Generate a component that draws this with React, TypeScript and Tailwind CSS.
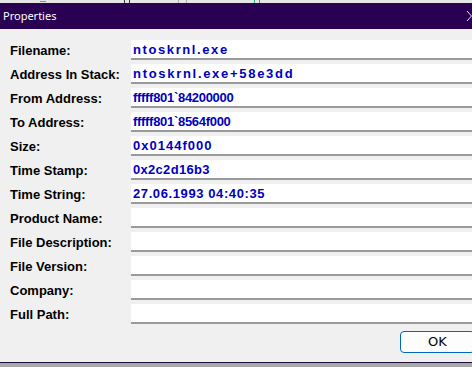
import React from "react";

const rows: [string, string, string][] = [
  ["Filename:", "ntoskrnl.exe", "tracking-[1.6px]"],
  ["Address In Stack:", "ntoskrnl.exe+58e3dd", "tracking-[1.7px]"],
  ["From Address:", "fffff801`84200000", "tracking-[-0.3px]"],
  ["To Address:", "fffff801`8564f000", "tracking-[-0.3px]"],
  ["Size:", "0x0144f000", "tracking-[1px]"],
  ["Time Stamp:", "0x2c2d16b3", "tracking-[0.3px]"],
  ["Time String:", "27.06.1993 04:40:35", "tracking-[0.6px]"],
  ["Product Name:", "", ""],
  ["File Description:", "", ""],
  ["File Version:", "", ""],
  ["Company:", "", ""],
  ["Full Path:", "", ""],
];

export default function App() {
  return (
    <div className="w-[472px] h-[367px] overflow-hidden bg-[#a9a9a9] flex flex-col" style={{ fontFamily: '"Liberation Sans", Arial, sans-serif' }}>
      <div className="h-[3px] bg-[#e6e6e6] relative shrink-0">
        <div className="absolute left-[40px] top-[1px] w-[6px] h-[1px] bg-[#888]" />
        <div className="absolute left-[124px] top-[0px] w-[6px] h-[3px] border-x border-[#334]" />
        <div className="absolute left-[178px] top-[0px] w-[9px] h-[3px] border-x border-[#aaa]" />
        <div className="absolute left-[254px] top-[0px] w-[6px] h-[3px] border-x border-[#2a8]" />
      </div>
      <div className="h-[26px] bg-[#290052] flex items-center justify-between shrink-0">
        <span className="pl-[3px] text-white text-[11px]" style={{ fontFamily: '"Noto Sans", "Open Sans", sans-serif' }}>Properties</span>
        <svg width="6" height="12" viewBox="0 0 6 12">
          <path d="M1 1 L5.5 6 L1 11" stroke="#e8e0f0" strokeWidth="1" fill="none" />
        </svg>
      </div>
      <div className="h-[334px] bg-[#f0f0f0] shrink-0 flex flex-col pt-[11px] border-b border-[#1c0b3c]">
        <div className="flex flex-col gap-[4px]">
          {rows.map(([label, value, track]) => (
            <div key={label} className="flex items-center h-[20px]">
              <div className="w-[131px] pl-[10px] text-[13px] font-bold text-black leading-none">{label}</div>
              <div className="flex-1 h-[20px] bg-white border-b-2 border-[#9a9a9a] flex items-center pl-[2px]">
                <span className={"text-[13px] font-bold text-[#0000c0] leading-none " + track}>{value}</span>
              </div>
            </div>
          ))}
        </div>
        <div className="flex justify-end mt-[7px] -mr-[3px]">
          <button className="w-[75px] h-[22px] rounded-[4px] border border-[#0067c0] bg-[#fdfdfd] text-[13px] text-black flex items-center justify-center" style={{ fontFamily: '"DejaVu Sans", sans-serif' }}>
            OK
          </button>
        </div>
      </div>
    </div>
  );
}
